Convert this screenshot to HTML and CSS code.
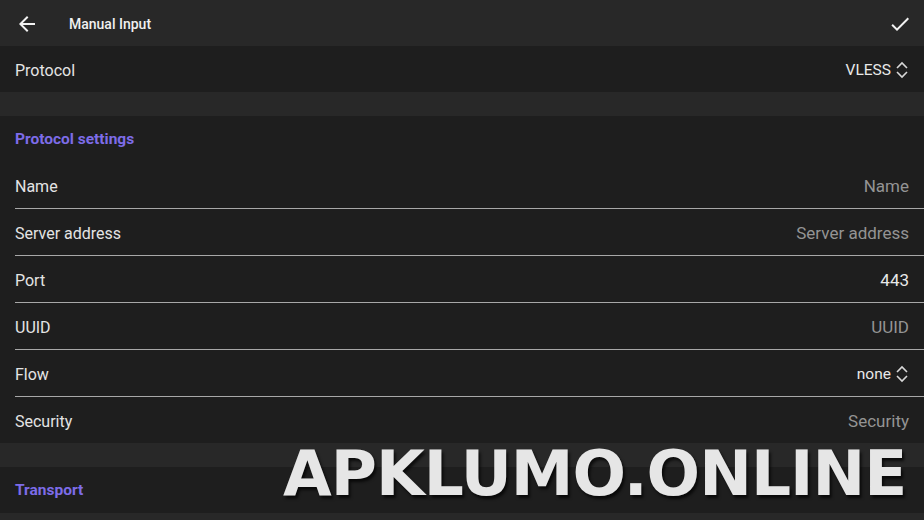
FILE: index.html
```html
<!DOCTYPE html>
<html lang="en">
<head>
    <meta charset="UTF-8">
    <meta name="viewport" content="width=device-width, initial-scale=1.0">
    <title>Manual Input</title>
    <link rel="stylesheet" href="styles.css">
</head>
<body>
    <div class="toolbar">
        <svg class="icon back" viewBox="0 0 24 24"><path d="M20 11H7.83l5.59-5.59L12 4l-8 8 8 8 1.41-1.41L7.83 13H20v-2z"/></svg>
        <span class="titulo">Manual Input</span>
        <svg class="icon check" viewBox="0 0 24 24"><path d="M9 16.17L4.83 12l-1.42 1.41L9 19 21 7l-1.41-1.41z"/></svg>
    </div>

    <div class="bloque">
        <div class="fila">
            <span class="label">Protocol</span>
            <span class="valor select">VLESS
                <svg class="flechas" viewBox="0 0 14 20"><path d="M2 8l5-5 5 5M2 12l5 5 5-5"/></svg>
            </span>
        </div>
    </div>

    <div class="espacio"></div>

    <div class="bloque">
        <div class="seccion">Protocol settings</div>
        <div class="fila linea">
            <span class="label">Name</span>
            <span class="placeholder">Name</span>
        </div>
        <div class="fila linea">
            <span class="label">Server address</span>
            <span class="placeholder">Server address</span>
        </div>
        <div class="fila linea">
            <span class="label">Port</span>
            <span class="valor grande">443</span>
        </div>
        <div class="fila linea">
            <span class="label">UUID</span>
            <span class="placeholder">UUID</span>
        </div>
        <div class="fila linea">
            <span class="label">Flow</span>
            <span class="valor select">none
                <svg class="flechas" viewBox="0 0 14 20"><path d="M2 8l5-5 5 5M2 12l5 5 5-5"/></svg>
            </span>
        </div>
        <div class="fila">
            <span class="label">Security</span>
            <span class="placeholder">Security</span>
        </div>
    </div>

    <div class="espacio"></div>

    <div class="bloque">
        <div class="seccion">Transport</div>
    </div>

    <!-- marca de agua -->
    <div class="marca">APKLUMO.ONLINE</div>
</body>
</html>
```

FILE: styles.css
```css
body {
    margin: 0;
    font-family: Roboto, 'Noto Sans', sans-serif;
    background: #282828;
    color: #e4e4e4;
    height: 520px;
    overflow: hidden;
    position: relative;
}

.toolbar {
    height: 46px;
    display: flex;
    align-items: center;
    padding: 1px 12px 0 15px;
    box-sizing: border-box;
    background: #282828;
}

.icon {
    width: 24px;
    height: 24px;
    fill: #f2f2f2;
}

.titulo {
    flex: 1;
    margin-left: 30px;
    font-size: 14px;
    font-weight: 500;
    color: #f0f0f0;
}

.bloque {
    background: #1e1e1e;
}

.espacio {
    height: 24px;
    background: #282828;
}

.fila {
    height: 46px;
    box-sizing: border-box;
    padding-top: 2px;
    display: flex;
    align-items: center;
    justify-content: space-between;
    margin-left: 15px;
    padding-right: 15px;
    font-size: 16px;
}

.fila.linea {
    height: 47px;
    border-bottom: 1px solid #a8a8a8;
}

.label {
    color: #e4e4e4;
}

.placeholder {
    font-size: 17px;
    color: #949494;
}

.valor {
    color: #e8e8e8;
}

.valor.grande {
    font-size: 17px;
}

.select {
    display: flex;
    align-items: center;
    gap: 4px;
    font-size: 15.5px;
}

.flechas {
    width: 14px;
    height: 20px;
    fill: none;
    stroke: #d8d8d8;
    stroke-width: 1.6;
}

.seccion {
    height: 46px;
    display: flex;
    align-items: center;
    padding-left: 15px;
    font-size: 15.5px;
    font-weight: 700;
    color: #7d6ce8;
}

.marca {
    position: absolute;
    left: 283px;
    top: 437px;
    font-family: 'DejaVu Sans', sans-serif;
    font-weight: bold;
    font-size: 63px;
    letter-spacing: -1px;
    color: #e6e6e6;
    text-shadow: 2px 3px 3px rgba(0, 0, 0, 0.7);
}
```
